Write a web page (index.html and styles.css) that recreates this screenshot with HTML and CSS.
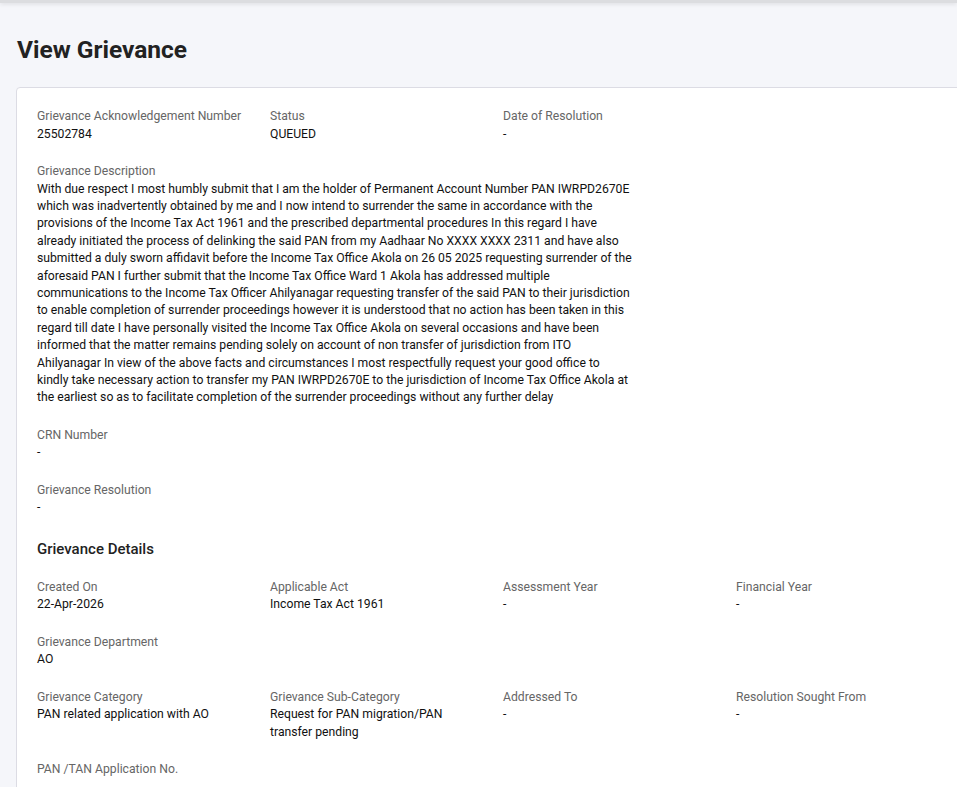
FILE: index.html
```html
<!DOCTYPE html>
<html lang="en">
<head>
    <meta charset="utf-8">
    <title>View Grievance</title>
    <link rel="stylesheet" href="styles.css">
</head>
<body>
    <div class="topbar"></div>
    <div class="page">
        <h1 class="title">View Grievance</h1>
        <div class="card">
            <div class="row">
                <div class="field"><div class="lbl">Grievance Acknowledgement Number</div><div class="val">25502784</div></div>
                <div class="field"><div class="lbl">Status</div><div class="val">QUEUED</div></div>
                <div class="field"><div class="lbl">Date of Resolution</div><div class="val">-</div></div>
            </div>
            <div class="field">
                <div class="lbl">Grievance Description</div>
                <div class="val desc">With due respect I most humbly submit that I am the holder of Permanent Account Number PAN IWRPD2670E which was inadvertently obtained by me and I now intend to surrender the same in accordance with the provisions of the Income Tax Act 1961 and the prescribed departmental procedures In this regard I have already initiated the process of delinking the said PAN from my Aadhaar No XXXX XXXX 2311 and have also submitted a duly sworn affidavit before the Income Tax Office Akola on 26 05 2025 requesting surrender of the aforesaid PAN I further submit that the Income Tax Office Ward 1 Akola has addressed multiple communications to the Income Tax Officer Ahilyanagar requesting transfer of the said PAN to their jurisdiction to enable completion of surrender proceedings however it is understood that no action has been taken in this regard till date I have personally visited the Income Tax Office Akola on several occasions and have been informed that the matter remains pending solely on account of non transfer of jurisdiction from ITO Ahilyanagar In view of the above facts and circumstances I most respectfully request your good office to kindly take necessary action to transfer my PAN IWRPD2670E to the jurisdiction of Income Tax Office Akola at the earliest so as to facilitate completion of the surrender proceedings without any further delay</div>
            </div>
            <div class="field"><div class="lbl">CRN Number</div><div class="val">-</div></div>
            <div class="field"><div class="lbl">Grievance Resolution</div><div class="val">-</div></div>

            <h2 class="section">Grievance Details</h2>
            <div class="row">
                <div class="field"><div class="lbl">Created On</div><div class="val">22-Apr-2026</div></div>
                <div class="field"><div class="lbl">Applicable Act</div><div class="val">Income Tax Act 1961</div></div>
                <div class="field"><div class="lbl">Assessment Year</div><div class="val">-</div></div>
                <div class="field"><div class="lbl">Financial Year</div><div class="val">-</div></div>
            </div>
            <div class="row">
                <div class="field"><div class="lbl">Grievance Department</div><div class="val">AO</div></div>
            </div>
            <div class="row">
                <div class="field"><div class="lbl">Grievance Category</div><div class="val">PAN related application with AO</div></div>
                <div class="field"><div class="lbl">Grievance Sub-Category</div><div class="val">Request for PAN migration/PAN transfer pending</div></div>
                <div class="field"><div class="lbl">Addressed To</div><div class="val">-</div></div>
                <div class="field"><div class="lbl">Resolution Sought From</div><div class="val">-</div></div>
            </div>
            <div class="row">
                <div class="field"><div class="lbl">PAN /TAN Application No.</div><div class="val">-</div></div>
            </div>
        </div>
    </div>
</body>
</html>
```

FILE: styles.css
```css
html { overflow: hidden; }
body {
    margin: 0;
    background: #f5f6fa;
    font-family: Roboto, "Liberation Sans", sans-serif;
    color: #1e1e1e;
}
.topbar {
    height: 3px;
    background: #dcdde0;
    box-shadow: 0 1px 4px rgba(0, 0, 0, 0.12);
}
.page { padding: 0 0 0 16px; }
.title {
    margin: 0;
    padding: 32px 0 22px 1px;
    font-size: 24.5px;
    line-height: 30px;
    font-weight: 700;
    color: #222;
}
.card {
    width: 980px;
    background: #fff;
    border: 1px solid #dcdce4;
    border-radius: 4px;
    padding: 20px;
}
.row {
    display: grid;
    grid-template-columns: repeat(4, 233px);
}
.row .field { padding-right: 16px; }
.field { margin-bottom: 20px; }
.lbl, .val {
    font-size: 12.2px;
    line-height: 17.5px;
}
.lbl { color: #666; }
.val { color: #111; }
.desc {
    width: 595px;
    line-height: 17.4px;
}
.section {
    margin: 0 0 18px;
    font-size: 15px;
    line-height: 24px;
    font-weight: 500;
    color: #222;
}
```
